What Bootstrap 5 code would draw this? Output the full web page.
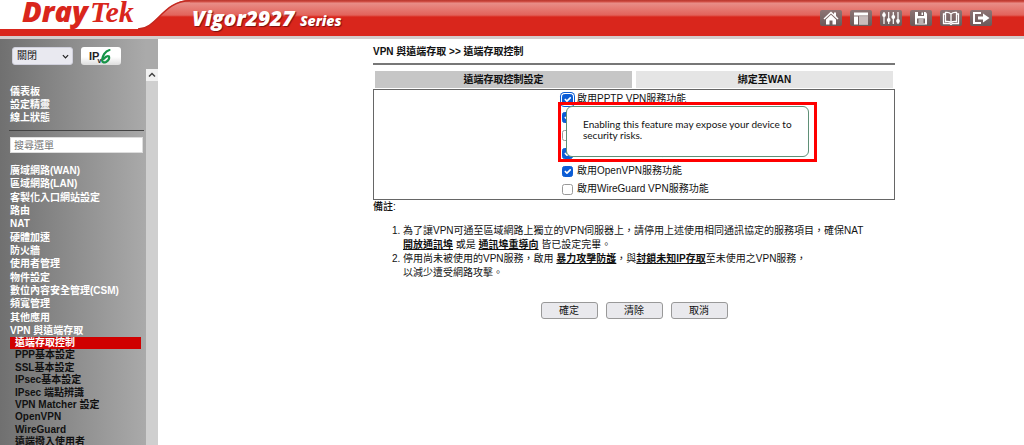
<!DOCTYPE html>
<html lang="zh-Hant">
<head>
<meta charset="utf-8">
<meta name="viewport" content="width=device-width, initial-scale=1">
<title>Vigor2927 Series</title>
<link href="https://cdn.jsdelivr.net/npm/bootstrap@5.3.0/dist/css/bootstrap.min.css" rel="stylesheet">
<style>
body{font:10px/14px "Liberation Sans","Noto Sans CJK TC",sans-serif;color:#111;background:#fff}
a{color:inherit}
.topbar{height:39px;border-bottom:3px solid #d3cccc}
.brand{width:190px}
.brand svg{position:absolute;inset:0}
.logo{position:absolute;left:22px;top:-4px;color:#d9261c;white-space:nowrap;display:flex;align-items:baseline;gap:2px}
.logo-a{font:italic 800 29px/30px "Open Sans",sans-serif}
.logo-b{font:italic bold 30px/30px "Liberation Serif",serif}
.redbar{background:linear-gradient(#b8352c 0,#d5544b 2px,#e88e88 3px,#e2635b 15px,#d9261c 17px,#d9261c 100%);color:#fff}
.model{font:italic 800 21px/36px "Open Sans",sans-serif;text-shadow:1px 1px 1px #7a1010;padding:3px 0 0 2px}
.model small{font-size:14px;font-weight:800}
.tool{width:22px;height:16px;border-radius:2px;background:linear-gradient(#8d7474,#6b5a5a);border:0}
.side{width:158px;background:linear-gradient(90deg,#707070,#aaa 146px)}
.side-body{width:146px}
.mode{width:61px;height:18px;font-size:10px;line-height:14px;padding:0 4px;border:1px solid #d0d0dc;border-radius:3px;background:#e9e9f0 url("data:image/svg+xml,%3Csvg xmlns='http://www.w3.org/2000/svg' viewBox='0 0 8 8'%3E%3Cpath d='M1 2.5l3 3 3-3' fill='none' stroke='%23222' stroke-width='1.4'/%3E%3C/svg%3E") no-repeat right 3px center/7px;appearance:none;color:#111}
.ipv6{width:40px;height:18px;border:0;border-radius:3px;background:linear-gradient(#fff 55%,#ddd)}
.menu,.menu a{color:#fff;font-weight:700;text-decoration:none}
.menu a{display:block;line-height:13px;white-space:nowrap}
.menu-top{padding:0 0 6px 10px}
.rule{height:1px;background:#444;margin:0 2px 0 9px}
.find{width:133px;height:16px;margin:6px 0 11px 10px;padding:0 3px;border:1px solid #ddd;font-size:10px;line-height:14px}
.find::placeholder{color:#777}
.menu-main{height:173px;padding-left:10px}
.menu .menu-sub{height:111px}
.menu .menu-sub a{color:#111;line-height:12px;margin:0 5px 0 10px;padding-left:5px}
.menu .menu-sub a.active{background:#d00000;color:#fff}
.scroll{width:12px;background:#cfcfcf;margin-top:30px}
.scroll button{width:12px;height:12px;background:#f1f1f1}
.content{max-width:522px;margin-left:215px}
.crumb{font-weight:700;padding:6px 0 4px;border-bottom:2px solid #777;margin-bottom:6px}
.tabs{margin:0 2px}
.tabs a{background:#e5e5e5;color:#111;font-weight:700;line-height:17px;text-decoration:none}
.tabs a.active{background:#c6c6c6}
.services{border:1px solid #666;margin-top:1px;padding:0 0 1px 188px}
.services label{height:18px;width:max-content}
.services input{margin:0;width:11px;height:11px;float:none;border:1px solid #999;border-radius:2px;background-size:11px}
.services input:checked{background-color:#0b5cd5;border-color:#0b5cd5}
.services input.ringed{box-shadow:0 0 0 1px #fff,0 0 0 2px #0b5cd5}
.warn{position:absolute;left:184px;top:12px;width:259px;height:60px;border:3px solid #f00}
.tip{margin:1px 5px 2px;height:51px;border:1px solid #5f9077;border-radius:6px;background:#fff;padding:12px 0 0 16px;font:10px/11px Lato,sans-serif}
.remark{font-weight:500}
.notes{padding-left:30px;margin:10px 0 22px}
.notes a{font-weight:700}
.act{width:57px;height:17px;border:1px solid #999;border-radius:3px;background:#e9e9ed;font-size:10px;line-height:14px;padding:0;color:#111}
</style>
</head>
<body class="vh-100 overflow-hidden d-flex flex-column">
<header class="topbar d-flex flex-shrink-0">
  <div class="brand position-relative flex-shrink-0">
    <svg width="190" height="36" viewBox="0 0 190 36" aria-hidden="true">
      <defs><linearGradient id="g" x1="0" y1="0" x2="0" y2="36" gradientUnits="userSpaceOnUse"><stop offset="0" stop-color="#b8352c"/><stop offset=".08" stop-color="#e88e88"/><stop offset=".42" stop-color="#e2635b"/><stop offset=".47" stop-color="#d9261c"/></linearGradient></defs>
      <path d="M0 29H138C157 29 163 0 190 0V36H0Z" fill="url(#g)"/>
      <path d="M138 29C157 29 163 .7 190 .7" fill="none" stroke="#c4281f" stroke-width="1.4"/>
    </svg>
    <div class="logo"><span class="logo-a">Dray</span><span class="logo-b">Tek</span></div>
  </div>
  <div class="redbar flex-fill d-flex align-items-center justify-content-between">
    <div class="model text-nowrap">Vigor2927 <small>Series</small></div>
    <nav class="d-flex gap-2 me-4 pe-2" aria-label="工具">
      <button class="tool p-0 d-flex" aria-label="首頁"><svg viewBox="0 0 22 16"><path d="M11 1.500L3.500 8.500l1 1L11 3.500l6.500 6 1-1L16 6V2.500h-2v1.700zM6 9.500V14.500h3.500V10.500h3v4H16V9.500l-5-4.700z" fill="#fff"/></svg></button>
      <button class="tool p-0 d-flex" aria-label="版面"><svg viewBox="0 0 22 16"><path d="M4 2.500h14v3H4zM4 6.500h4v8H4zM9 6.500h9v8H9z" fill="#fff"/><path d="M9 7h9v7H9z" fill="#c9bcbc"/></svg></button>
      <button class="tool p-0 d-flex" aria-label="設定"><svg viewBox="0 0 22 16"><path d="M4 2v12M8.700 2v12M13.300 2v12M18 2v12" stroke="#fff" stroke-width="1.200"/><g fill="#fff"><circle cx="4" cy="5" r="1.900"/><circle cx="8.700" cy="10" r="1.900"/><circle cx="13.300" cy="7" r="1.900"/><circle cx="18" cy="11" r="1.900"/></g></svg></button>
      <button class="tool p-0 d-flex" aria-label="儲存"><svg viewBox="0 0 22 16"><path d="M5 2h10.500L17 3.500V14.500H5z" fill="#fff"/><path d="M8 2h6v4H8zM7 8.500h8v5H7z" fill="#766"/><path d="M8.500 10h5M8.500 12h5" stroke="#fff"/><path d="M11.500 2.500h1.500v2.500h-1.500z" fill="#fff"/></svg></button>
      <button class="tool p-0 d-flex" aria-label="手冊"><svg viewBox="0 0 22 16"><path d="M11 4Q9 2 5.500 2.500V11.500Q9 11 11 12.500Q13 11 16.500 11.500V2.500Q13 2 11 4V12.500M5 4H3.500V13.500H9.500L11 14.500 12.500 13.500H18.500V4H17" fill="none" stroke="#fff" stroke-width="1.300"/></svg></button>
      <button class="tool p-0 d-flex" aria-label="登出"><svg viewBox="0 0 22 16"><path d="M11 3H4V13H11" fill="none" stroke="#fff" stroke-width="2"/><path d="M8 6.500h5V3.500L19.500 8 13 12.500V9.500H8z" fill="#fff"/></svg></button>
    </nav>
  </div>
</header>
<div class="d-flex flex-fill overflow-hidden">
  <aside class="side d-flex flex-shrink-0 overflow-hidden">
    <div class="side-body flex-shrink-0">
      <div class="d-flex gap-2 pt-2 ms-2 ps-1">
        <select class="mode" aria-label="模式"><option>關閉</option></select>
        <button class="ipv6 p-0 d-flex" aria-label="IPv6"><svg width="40" height="18" viewBox="0 0 40 18"><text x="8" y="13" font-family="Liberation Sans" font-size="11" font-weight="700" fill="#222">IP<tspan font-size="7" dx="-2" dy="3">v</tspan></text><path d="M28.500 3C24 4 21.500 9 21 13Q21.500 16.500 25 15Q29 12.500 28 9.500Q26 8 22.500 12" fill="none" stroke="#159447" stroke-width="2.200" stroke-linecap="round"/></svg></button>
      </div>
      <nav class="menu" aria-label="選單">
        <div class="menu-top pt-3 mt-1"><a href="#">儀表板</a><a href="#">設定精靈</a><a href="#">線上狀態</a></div>
        <div class="rule"></div>
        <input class="find d-block" type="text" placeholder="搜尋選單" aria-label="搜尋選單">
        <div class="menu-main d-flex flex-column justify-content-between">
          <a href="#">廣域網路(WAN)</a><a href="#">區域網路(LAN)</a><a href="#">客製化入口網站設定</a><a href="#">路由</a><a href="#">NAT</a><a href="#">硬體加速</a><a href="#">防火牆</a><a href="#">使用者管理</a><a href="#">物件設定</a><a href="#">數位內容安全管理(CSM)</a><a href="#">頻寬管理</a><a href="#">其他應用</a><a href="#">VPN 與遠端存取</a>
        </div>
        <div class="menu-sub d-flex flex-column justify-content-between">
          <a href="#" class="active" aria-current="page">遠端存取控制</a><a href="#">PPP基本設定</a><a href="#">SSL基本設定</a><a href="#">IPsec基本設定</a><a href="#">IPsec 端點辨識</a><a href="#">VPN Matcher 設定</a><a href="#">OpenVPN</a><a href="#">WireGuard</a><a href="#">遠端撥入使用者</a>
        </div>
      </nav>
    </div>
    <div class="scroll"><button class="border-0 p-0 d-flex" aria-label="向上捲動"><svg viewBox="0 0 12 12"><path d="M3 7.500l3-3 3 3" fill="none" stroke="#444" stroke-width="1.500"/></svg></button></div>
  </aside>
  <main class="content flex-fill">
    <div class="crumb">VPN 與遠端存取 &gt;&gt; 遠端存取控制</div>
    <nav class="tabs d-flex text-center gap-1" aria-label="分頁"><a class="col active" href="#">遠端存取控制設定</a><a class="col" href="#">綁定至WAN</a></nav>
    <div class="services position-relative">
      <label class="d-flex align-items-center gap-1"><input class="form-check-input ringed" type="checkbox" checked>啟用PPTP VPN服務功能</label>
      <label class="d-flex align-items-center gap-1"><input class="form-check-input" type="checkbox" checked>啟用IPsec VPN服務功能</label>
      <label class="d-flex align-items-center gap-1"><input class="form-check-input" type="checkbox">啟用L2TP VPN服務功能</label>
      <label class="d-flex align-items-center gap-1"><input class="form-check-input" type="checkbox" checked>啟用SSL VPN服務功能</label>
      <label class="d-flex align-items-center gap-1"><input class="form-check-input" type="checkbox" checked>啟用OpenVPN服務功能</label>
      <label class="d-flex align-items-center gap-1"><input class="form-check-input" type="checkbox">啟用WireGuard VPN服務功能</label>
      <div class="warn"><div class="tip" role="tooltip">Enabling this feature may expose your device to<br>security risks.</div></div>
    </div>
    <div class="remark">備註:</div>
    <ol class="notes text-nowrap">
      <li>為了讓VPN可通至區域網路上獨立的VPN伺服器上，請停用上述使用相同通訊協定的服務項目，確保NAT<br><a href="#">開放通訊埠</a> 或是 <a href="#">通訊埠重導向</a> 皆已設定完畢。</li>
      <li>停用尚未被使用的VPN服務，啟用 <a href="#">暴力攻擊防護</a>，與<a href="#">封鎖未知IP存取</a>至未使用之VPN服務，<br>以減少遭受網路攻擊。</li>
    </ol>
    <div class="d-flex justify-content-center gap-2"><button class="act">確定</button><button class="act">清除</button><button class="act">取消</button></div>
  </main>
</div>
<script src="https://cdn.jsdelivr.net/npm/bootstrap@5.3.0/dist/js/bootstrap.bundle.min.js"></script>
</body>
</html>
